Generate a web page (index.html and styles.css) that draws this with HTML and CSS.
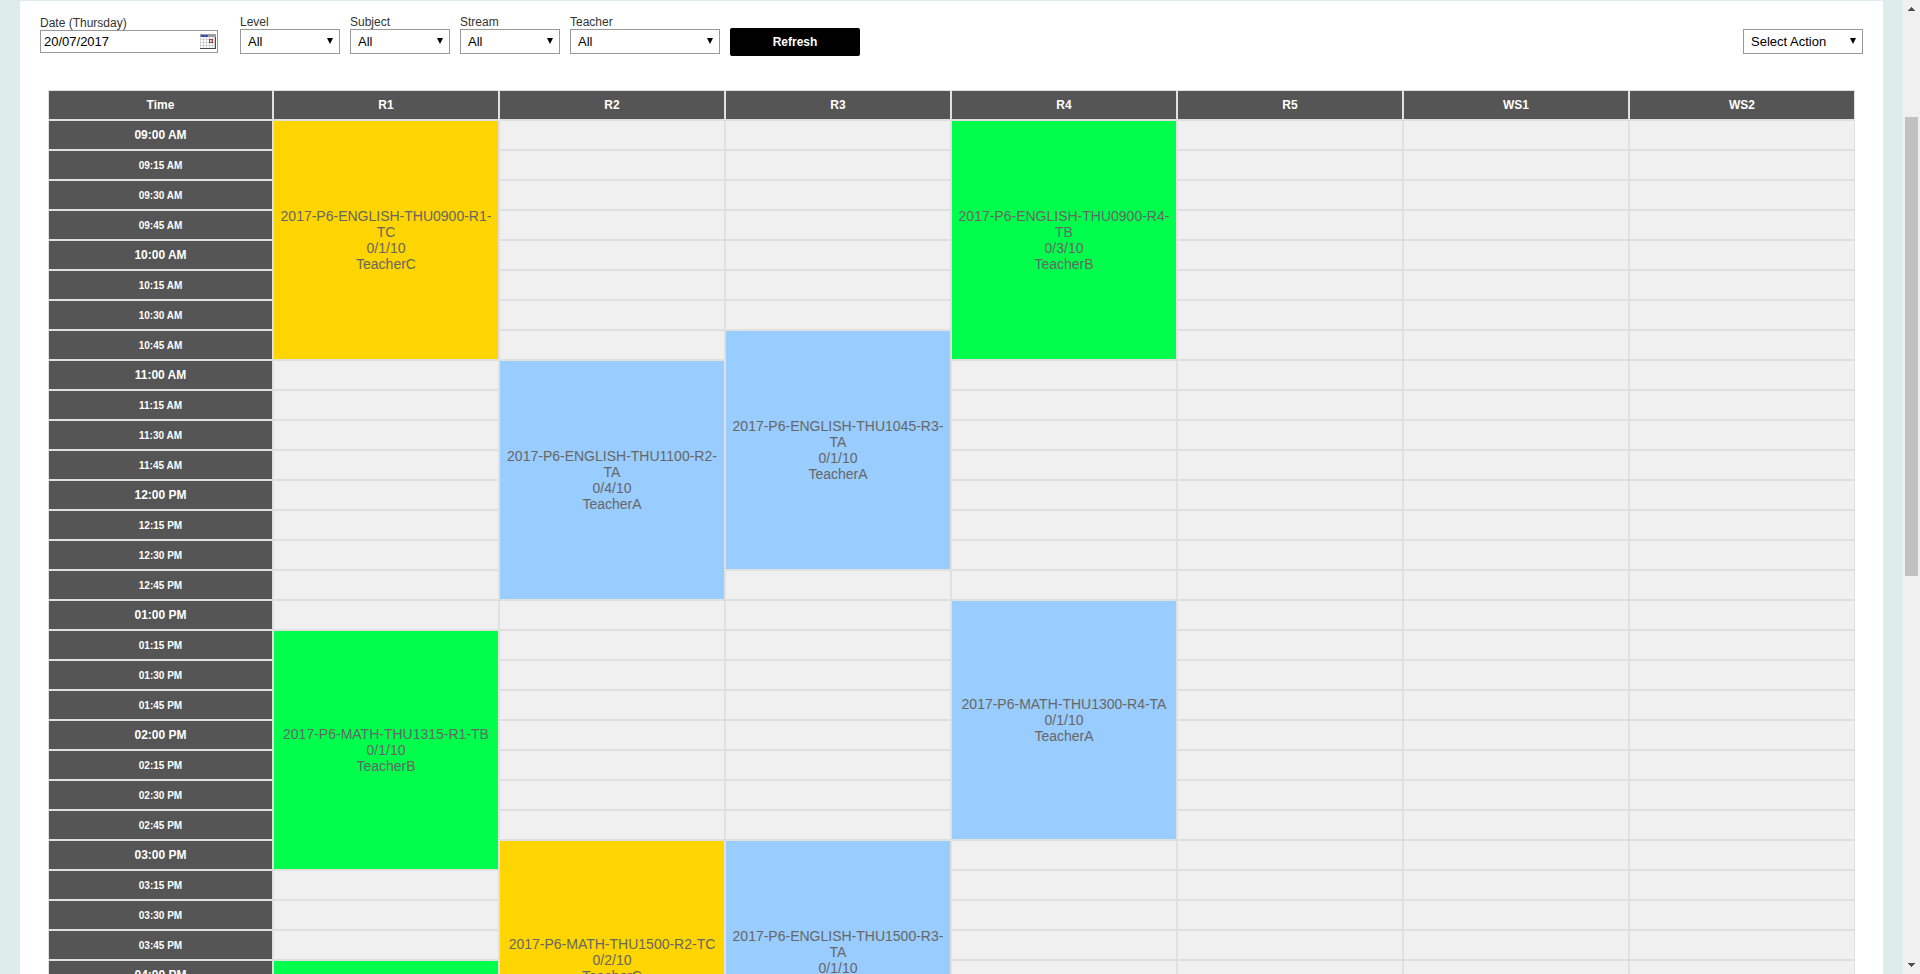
FILE: index.html
```html
<!DOCTYPE html>
<html lang="en">
<head>
    <meta charset="UTF-8">
    <meta name="viewport" content="width=device-width, initial-scale=1.0">
    <title>Class Schedule</title>
    <link rel="stylesheet" href="styles.css">
</head>
<body>
    <div class="window">
        <main class="page">
            <div class="panel">
                <form class="toolbar">
                    <div class="field date-field">
                        <label for="date">Date (Thursday)</label>
                        <div class="date-box">
                            <input type="text" id="date" value="20/07/2017">
                            <button type="button" class="calendar-btn" aria-label="Open calendar">
                                <svg width="16" height="15" viewBox="0 0 16 15" shape-rendering="crispEdges">
                                    <rect width="16" height="15" fill="#d4d4d4"/>
                                    <path fill="#fff" d="M1 3h2v2H1zM4 3h2v2H4zM7 3h2v2H7zM10 3h2v2h-2zM13 3h1v2h-1zM1 6h2v2H1zM4 6h2v2H4zM7 6h2v2H7zM13 6h1v2h-1zM1 9h2v2H1zM4 9h2v2H4zM7 9h2v2H7zM10 9h2v2h-2zM13 9h1v2h-1zM1 12h2v2H1zM4 12h2v2H4zM7 12h2v2H7zM10 12h2v2h-2zM13 12h1v2h-1z"/>
                                    <rect width="16" height="3" fill="#a0a0a0"/>
                                    <rect x="1" y="1" width="7" height="2" fill="#4549b5"/>
                                    <path fill="#4a4a4a" d="M15 3h1v12H0v-1h15z"/>
                                    <path fill="#a83c3c" fill-rule="evenodd" d="M9 5h4v4H9zM10 6v2h2V6z"/>
                                </svg>
                            </button>
                        </div>
                    </div>
                    <div class="field">
                        <label for="level">Level</label>
                        <div class="select-box"><select id="level"><option>All</option></select></div>
                    </div>
                    <div class="field">
                        <label for="subject">Subject</label>
                        <div class="select-box"><select id="subject"><option>All</option></select></div>
                    </div>
                    <div class="field">
                        <label for="stream">Stream</label>
                        <div class="select-box"><select id="stream"><option>All</option></select></div>
                    </div>
                    <div class="field wide">
                        <label for="teacher">Teacher</label>
                        <div class="select-box"><select id="teacher"><option>All</option></select></div>
                    </div>
                    <button type="button" class="refresh-btn">Refresh</button>
                    <div class="select-box action-box">
                        <select id="action" aria-label="Select Action"><option>Select Action</option></select>
                    </div>
                </form>
                <table class="schedule">
                    <thead>
                        <tr>
                            <th class="time-col">Time</th>
                            <th>R1</th>
                            <th>R2</th>
                            <th>R3</th>
                            <th>R4</th>
                            <th>R5</th>
                            <th>WS1</th>
                            <th>WS2</th>
                        </tr>
                    </thead>
                    <tbody id="slots"></tbody>
                </table>
            </div>
        </main>
        <div class="scrollbar">
            <svg class="arrow" width="17" height="17" viewBox="0 0 17 17" shape-rendering="crispEdges"><path fill="#505050" d="M8 7h1v1h1v1h1v1h1v1H5v-1h1V9h1V8h1z"/></svg>
            <div class="track">
                <div class="track-before"></div>
                <div class="thumb"></div>
                <div class="track-after"></div>
            </div>
            <svg class="arrow" width="17" height="17" viewBox="0 0 17 17" shape-rendering="crispEdges"><path fill="#505050" d="M5 6h7v1h-1v1h-1v1H9v1H8V9H7V8H6V7H5z"/></svg>
        </div>
    </div>
    <script src="script.js"></script>
</body>
</html>
```

FILE: styles.css
```css
* { margin: 0; padding: 0; box-sizing: border-box; }
body {
    font-family: "Liberation Sans", Arial, sans-serif;
    font-size: 12px;
    color: #333;
    background: #dfecec;
}
input, select, button { font-family: inherit; }

.window {
    display: flex;
    height: 100vh;
    overflow: hidden;
}
.page {
    flex: 1;
    min-width: 0;
    padding: 1px 20px 0;
}
.panel {
    background: #fff;
    padding: 14px 20px 20px;
}

/* filters */
.toolbar {
    display: flex;
    align-items: flex-start;
    gap: 10px;
    min-height: 75px;
}
.field { width: 100px; }
.field.wide { width: 150px; }
.date-field {
    width: 178px;
    margin: 1px 12px 0 0;
}
.field label {
    display: block;
    line-height: 14px;
}
.date-box {
    display: flex;
    align-items: center;
    height: 23px;
    border: 1px solid #999;
}
.date-box input {
    flex: 1;
    min-width: 0;
    padding-left: 3px;
    border: none;
    outline: none;
    background: none;
    font-size: 13px;
    color: #000;
}
.calendar-btn {
    width: 16px;
    height: 15px;
    margin-right: 1px;
    border: none;
    background: none;
    cursor: pointer;
}
.calendar-btn svg { display: block; }
.select-box { position: relative; }
.select-box select {
    display: block;
    width: 100%;
    height: 25px;
    padding: 0 20px 0 7px;
    border: 1px solid #999;
    border-radius: 0;
    background: #fff;
    appearance: none;
    font-size: 13px;
    color: #000;
}
.select-box::after {
    content: '';
    position: absolute;
    top: 9px;
    right: 7px;
    border-top: 6px solid #000;
    border-left: 3px solid transparent;
    border-right: 3px solid transparent;
    pointer-events: none;
}
.refresh-btn {
    width: 130px;
    height: 28px;
    margin-top: 13px;
    border: none;
    border-radius: 2px;
    background: #000;
    color: #fff;
    font-size: 12px;
    font-weight: bold;
    cursor: pointer;
}
.action-box {
    width: 120px;
    margin: 14px 0 0 auto;
}

/* timetable */
.schedule {
    width: calc(100% - 16px);
    margin: 0 8px;
    table-layout: fixed;
    border-collapse: separate;
    border-spacing: 0;
}
.schedule th, .schedule td {
    height: 30px;
    border: 1px solid #e0e0e0;
    text-align: center;
    vertical-align: middle;
}
.schedule th {
    background: #555;
    color: #fff;
    font-size: 12px;
    font-weight: bold;
}
.schedule .time-col { width: 225px; }
.schedule th.quarter { font-size: 10px; }
.schedule td {
    background: #f0f0f0;
    padding: 0 5px;
    font-size: 14px;
    line-height: 16px;
    color: #666;
}
.schedule td.gold { background: #ffd500; }
.schedule td.green { background: #00ff4c; }
.schedule td.blue { background: #99ccff; }

/* scrollbar */
.scrollbar {
    display: flex;
    flex-direction: column;
    width: 17px;
    background: #f0f0f0;
}
.arrow { display: block; }
.track {
    flex: 1;
    display: flex;
    flex-direction: column;
    padding: 0 2px;
}
.track-before { flex: 100; }
.thumb { flex: 459; background: #c1c1c1; }
.track-after { flex: 381; }
```

FILE: script.js
```javascript
const rooms = ['R1', 'R2', 'R3', 'R4', 'R5', 'WS1', 'WS2'];
const firstHour = 9;
const totalSlots = 32;
const classSlots = 8;

// slot = number of quarters after 09:00 AM
const classes = [
    { room: 'R1', slot: 0, color: 'gold', lines: ['2017-P6-ENGLISH-THU0900-R1-TC', '0/1/10', 'TeacherC'] },
    { room: 'R4', slot: 0, color: 'green', lines: ['2017-P6-ENGLISH-THU0900-R4-TB', '0/3/10', 'TeacherB'] },
    { room: 'R3', slot: 7, color: 'blue', lines: ['2017-P6-ENGLISH-THU1045-R3-TA', '0/1/10', 'TeacherA'] },
    { room: 'R2', slot: 8, color: 'blue', lines: ['2017-P6-ENGLISH-THU1100-R2-TA', '0/4/10', 'TeacherA'] },
    { room: 'R4', slot: 16, color: 'blue', lines: ['2017-P6-MATH-THU1300-R4-TA', '0/1/10', 'TeacherA'] },
    { room: 'R1', slot: 17, color: 'green', lines: ['2017-P6-MATH-THU1315-R1-TB', '0/1/10', 'TeacherB'] },
    { room: 'R2', slot: 24, color: 'gold', lines: ['2017-P6-MATH-THU1500-R2-TC', '0/2/10', 'TeacherC'] },
    { room: 'R3', slot: 24, color: 'blue', lines: ['2017-P6-ENGLISH-THU1500-R3-TA', '0/1/10', 'TeacherA'] },
    { room: 'R1', slot: 28, color: 'green', lines: [] }
];

function formatTime(slot) {
    const hour = firstHour + Math.floor(slot / 4);
    const minute = (slot % 4) * 15;
    const hour12 = hour > 12 ? hour - 12 : hour;
    return `${String(hour12).padStart(2, '0')}:${String(minute).padStart(2, '0')} ${hour < 12 ? 'AM' : 'PM'}`;
}

const body = document.getElementById('slots');
for (let slot = 0; slot < totalSlots; slot++) {
    const row = body.insertRow();
    const time = document.createElement('th');
    time.textContent = formatTime(slot);
    if (slot % 4) time.className = 'quarter';
    row.appendChild(time);

    rooms.forEach(room => {
        const current = classes.find(c => c.room === room && slot >= c.slot && slot < c.slot + classSlots);
        // the cell is already covered by the rowspan above
        if (current && current.slot !== slot) return;
        const cell = row.insertCell();
        if (current) {
            cell.rowSpan = Math.min(classSlots, totalSlots - slot);
            cell.className = current.color;
            cell.innerHTML = current.lines.join('<br>');
        }
    });
}
```
